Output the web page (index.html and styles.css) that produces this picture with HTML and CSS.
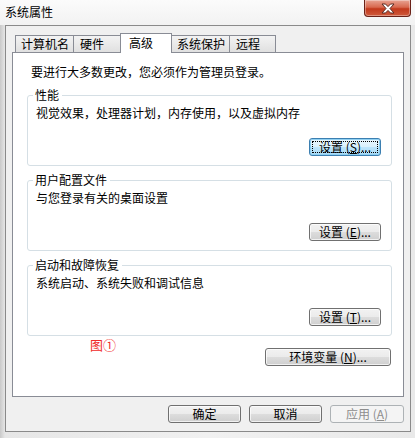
FILE: index.html
```html
<!DOCTYPE html>
<html lang="zh-CN">
<head>
  <meta charset="UTF-8">
  <title>系统属性</title>
  <link rel="stylesheet" href="styles.css">
</head>
<body>
  <div class="titlebar">
    <span class="title">系统属性</span>
    <button class="close" aria-label="关闭">
      <svg width="16" height="11" viewBox="0 0 16 11">
        <path d="M2 1 L5.5 1 L8 3.6 L10.5 1 L14 1 L10 5.5 L14 10 L10.5 10 L8 7.4 L5.5 10 L2 10 L6 5.5 Z" fill="#fff" stroke="#5a2a22" stroke-width="1" stroke-linejoin="round"/>
      </svg>
    </button>
  </div>

  <div class="client">
    <div class="tabs">
      <div class="tab t1">计算机名</div>
      <div class="tab t2">硬件</div>
      <div class="tab t3 active">高级</div>
      <div class="tab t4">系统保护</div>
      <div class="tab t5">远程</div>
    </div>

    <div class="panel">
      <p class="notice">要进行大多数更改，您必须作为管理员登录。</p>

      <fieldset class="group">
        <legend>性能</legend>
        <p class="desc">视觉效果，处理器计划，内存使用，以及虚拟内存</p>
        <div class="actions">
          <button class="btn focused">设置 (<u>S</u>)...</button>
        </div>
      </fieldset>

      <fieldset class="group">
        <legend>用户配置文件</legend>
        <p class="desc">与您登录有关的桌面设置</p>
        <div class="actions">
          <button class="btn">设置 (<u>E</u>)...</button>
        </div>
      </fieldset>

      <fieldset class="group">
        <legend>启动和故障恢复</legend>
        <p class="desc">系统启动、系统失败和调试信息</p>
        <div class="actions">
          <button class="btn">设置 (<u>T</u>)...</button>
        </div>
      </fieldset>

      <div class="extra">
        <span class="mark">图①</span>
        <button class="btn env">环境变量 (<u>N</u>)...</button>
      </div>
    </div>

    <div class="footer">
      <button class="btn">确定</button>
      <button class="btn">取消</button>
      <button class="btn wide" disabled>应用 (<u>A</u>)</button>
    </div>
  </div>
</body>
</html>
```

FILE: styles.css
```css
* {
  box-sizing: border-box;
}
body {
  margin: 0;
  width: 415px;
  height: 438px;
  overflow: hidden;
  font-family: "Noto Sans CJK SC", "DejaVu Sans", sans-serif;
  font-size: 12px;
  color: #000;
  background: linear-gradient(to right, #c9c9c9 0, #e6e6e6 5px, #f1f1f1 50%, #e9e9e9 100%);
}
p {
  margin: 0;
  line-height: 14px;
}
.titlebar {
  height: 25px;
  display: flex;
  align-items: flex-start;
  justify-content: space-between;
  background: linear-gradient(to bottom, #fbfbfb, #f2f2f2);
}
.title {
  margin: 5px 0 0 5px;
  line-height: 14px;
}
.close {
  width: 47px;
  height: 17px;
  margin-right: 4px;
  padding: 0;
  border: 1px solid #6a2118;
  border-top: none;
  border-radius: 0 0 4px 4px;
  background: linear-gradient(to bottom, #e8a493 0%, #d8694f 45%, #c2391c 55%, #cf5a3c 100%);
  box-shadow: inset 0 0 0 1px rgba(255, 255, 255, 0.35);
  display: flex;
  align-items: center;
  justify-content: center;
}
.client {
  margin-left: 5px;
  width: 406px;
  height: 407px;
  border: 1px solid #8a8a8a;
  background: #f0f0f0;
  padding: 7px 6px 0 6px;
}
.tabs {
  display: flex;
  align-items: flex-end;
  height: 19px;
  padding-left: 3px;
}
.tab {
  height: 17px;
  margin-left: -1px;
  padding-left: 6px;
  line-height: 16px;
  border: 1px solid #898c95;
  border-bottom: none;
  background: linear-gradient(to bottom, #f3f3f3, #e0e0e0);
  white-space: nowrap;
}
.t1 { width: 59px; margin-left: 0; padding-left: 5px; }
.t2 { width: 48px; }
.t3 { width: 52px; }
.t4 { width: 59px; padding-left: 5px; }
.t5 { width: 47px; }
.tab.active {
  height: 20px;
  margin-bottom: -1px;
  padding-left: 8px;
  line-height: 17px;
  background: #fff;
  position: relative;
  z-index: 1;
}
.panel {
  height: 345px;
  border: 1px solid #898c95;
  background: #fff;
  padding: 12px 11px 0 14px;
}
.notice {
  margin-left: 4px;
}
.group {
  margin: 7px 0 0 0;
  padding: 4px 10px 9px 8px;
  border: 1px solid #d5dfe5;
  border-radius: 3px;
  min-width: 0;
}
.notice + .group {
  margin-top: 9px;
}
.group legend {
  padding: 0 3px 0 2px;
  margin-left: -3px;
  line-height: 14px;
}
.actions {
  display: flex;
  justify-content: flex-end;
  margin-top: 18px;
}
.btn {
  width: 72px;
  height: 18px;
  padding: 0;
  font-family: inherit;
  font-size: 12px;
  line-height: 16px;
  color: #000;
  border: 1px solid #707070;
  border-radius: 3px;
  background: linear-gradient(to bottom, #f2f2f2 0%, #ebebeb 50%, #dddddd 50%, #cfcfcf 100%);
  box-shadow: inset 0 0 0 1px rgba(255, 255, 255, 0.7);
  white-space: nowrap;
}
.btn u {
  text-underline-offset: 1px;
}
.btn.focused {
  border-color: #3c7fb1;
  background: linear-gradient(to bottom, #eaf6fd 0%, #d9f0fc 50%, #bee6fd 50%, #a7d9f5 100%);
  box-shadow: inset 0 0 0 1px #8fd0f2;
  outline: 1px dotted #000;
  outline-offset: -4px;
}
.extra {
  display: flex;
  align-items: flex-start;
  margin-top: 2px;
}
.mark {
  margin-left: 63px;
  font-size: 13px;
  line-height: 14px;
  color: #f02a2a;
}
.btn.env {
  width: 126px;
  margin: 10px 1px 0 auto;
}
.footer {
  display: flex;
  justify-content: flex-end;
  gap: 8px;
  margin-top: 8px;
}
.footer .btn {
  width: 73px;
}
.footer .btn.wide {
  width: 74px;
}
.btn:disabled {
  color: #8d8d8d;
  border-color: #adb2b5;
  background: #f4f4f4;
  box-shadow: none;
}
```
